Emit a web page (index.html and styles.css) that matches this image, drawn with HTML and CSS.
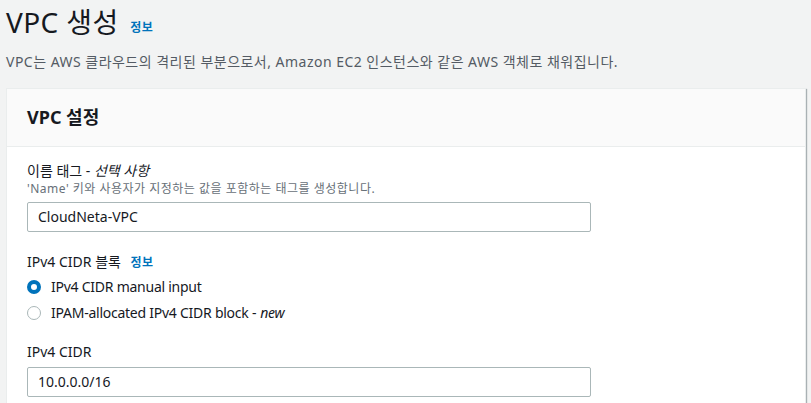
FILE: index.html
```html
<!DOCTYPE html>
<html lang="ko">
<head>
<meta charset="utf-8">
<link rel="stylesheet" href="styles.css">
</head>
<body>
<div class="page">
  <header class="head">
    <h1 class="title">VPC 생성 <a class="info title-info">정보</a></h1>
    <p class="subtitle">VPC는 AWS 클라우드의 격리된 부분으로서, Amazon EC2 인스턴스와 같은 AWS 객체로 채워집니다.</p>
  </header>
  <section class="card">
    <div class="card-head"><h2>VPC 설정</h2></div>
    <div class="card-body">
      <div class="field">
        <div class="label">이름 태그 - <i>선택 사항</i></div>
        <div class="desc">'Name' 키와 사용자가 지정하는 값을 포함하는 태그를 생성합니다.</div>
        <div class="input">CloudNeta-VPC</div>
      </div>
      <div class="field field-radios">
        <div class="label">IPv4 CIDR 블록 <a class="info">정보</a></div>
        <div class="radios">
          <div class="radio"><span class="dot on"></span>IPv4 CIDR manual input</div>
          <div class="radio"><span class="dot"></span>IPAM-allocated IPv4 CIDR block - <i>new</i></div>
        </div>
      </div>
      <div class="field">
        <div class="label">IPv4 CIDR</div>
        <div class="input">10.0.0.0/16</div>
      </div>
    </div>
  </section>
</div>
</body>
</html>
```
FILE: styles.css
```css
html, body {
  margin: 0;
  padding: 0;
  background: #f2f3f3;
  font-family: "Noto Sans", "Open Sans", "Noto Sans CJK KR", sans-serif;
  color: #16191f;
  overflow: hidden;
}
.page {
  padding: 0 5px 0 6px;
}
.head {
  padding-top: 2px;
}
.title {
  margin: 0;
  font-size: 28px;
  font-weight: 400;
  line-height: 40px;
  letter-spacing: 0.4px;
}
.info {
  color: #0073bb;
  font-size: 12px;
  font-weight: 700;
  margin-left: 6px;
  letter-spacing: 0.3px;
}
.title-info {
  margin-left: 4px;
  vertical-align: 1px;
}
.subtitle {
  margin: 3px 0 0;
  font-size: 14px;
  line-height: 22px;
  color: #545b64;
  letter-spacing: 0.48px;
}
.card {
  margin-top: 15px;
  background: #fff;
  border: 1px solid #eaeded;
  box-shadow: 1px 1px 1px 0 rgba(0,28,36,0.3);
  height: 330px;
}
.card-head {
  background: #fafafa;
  border-bottom: 1px solid #eaeded;
  padding: 15px 20px 16px;
}
.card-head h2 {
  margin: 0;
  font-size: 18px;
  font-weight: 700;
  line-height: 26px;
}
.card-body {
  padding: 14px 20px 0;
}
.field {
  margin-bottom: 20px;
}
.field-radios {
  margin-bottom: 16px;
}
.label {
  font-size: 14px;
  line-height: 20px;
}
.label i { font-style: italic; }
.desc {
  font-size: 12px;
  line-height: 16px;
  color: #687078;
  margin-bottom: 5px;
  letter-spacing: 0.5px;
}
.input {
  width: 542px;
  height: 28px;
  border: 1px solid #aab7b8;
  border-radius: 2px;
  padding: 0 10px;
  font-size: 14px;
  line-height: 28px;
  color: #16191f;
}
.field .label + .input { margin-top: 5px; }
.radios {
  margin-top: 1px;
}
.radio {
  display: flex;
  align-items: center;
  font-size: 14px;
  line-height: 26px;
  letter-spacing: -0.25px;
}
.radio i { margin-left: 4px; }
.dot {
  width: 14px;
  height: 14px;
  border: 1px solid #aab7b8;
  border-radius: 50%;
  box-sizing: border-box;
  margin: 0 10px 0 0;
}
.dot.on {
  border: 4px solid #0073bb;
}
```
